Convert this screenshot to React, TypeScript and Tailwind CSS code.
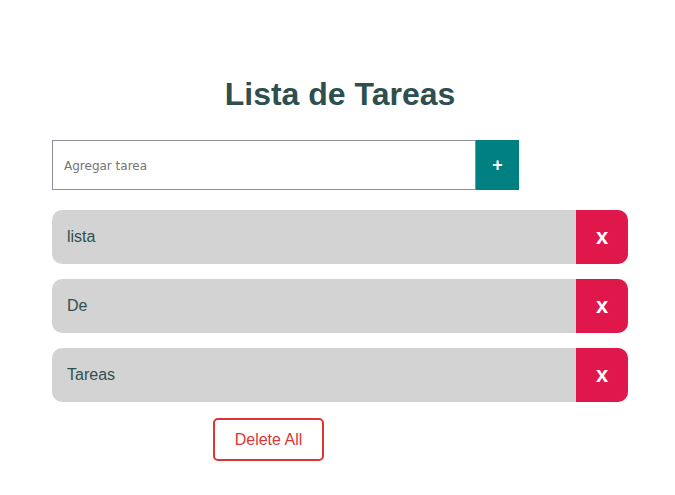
export default function App() {
  const tasks = ["lista", "De", "Tareas"];

  return (
    <div className="min-h-screen w-[675px] bg-white font-['Liberation_Sans',Arial,sans-serif]">
      <div className="ml-[52px] w-[576px] pt-[74px]">
        <h1 className="text-center text-[32px] leading-[40px] font-bold text-[#2f4f4f]">
          Lista de Tareas
        </h1>

        {/* Input */}
        <div className="mt-[26px] flex">
          <input
            placeholder="Agregar tarea"
            className="h-[50px] w-[424px] border border-[#8f8b9f] px-[11px] pt-[2px] text-[12px] font-['DejaVu_Sans',sans-serif] placeholder:text-[#757575] outline-none"
          />
          <button className="h-[50px] w-[43px] bg-[#008080] text-[18px] font-bold text-white">
            +
          </button>
        </div>

        {/* Tasks */}
        <div className="mt-[20px] flex flex-col gap-[15px]">
          {tasks.map((t) => (
            <div
              key={t}
              className="flex h-[54px] items-center overflow-hidden rounded-[10px] bg-[#d3d3d3]"
            >
              <span className="flex-1 pl-[15px] text-[16px] text-[#2f4f4f]">{t}</span>
              <button className="flex h-full w-[52px] items-center justify-center bg-[#e0174a] pb-[2px] text-[22px] font-bold text-white">
                x
              </button>
            </div>
          ))}
        </div>

        <button className="ml-[161px] mt-[16px] h-[43px] w-[111px] rounded-[5px] border-2 border-[#dc3535] text-[16px] text-[#dc3535]">
          Delete All
        </button>
      </div>
    </div>
  );
}
